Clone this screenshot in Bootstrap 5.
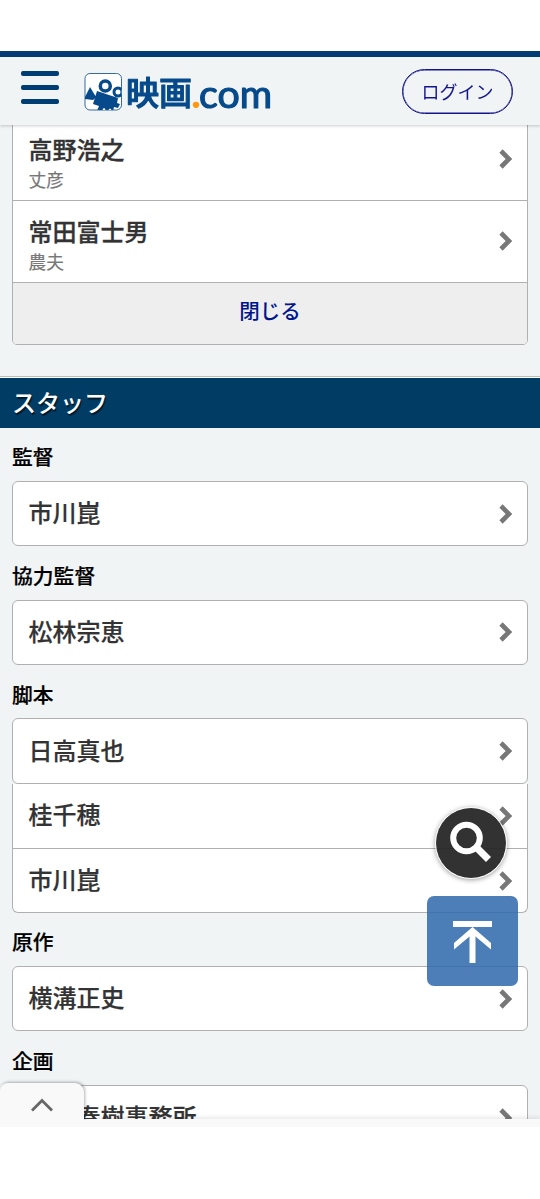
<!DOCTYPE html>
<html lang="ja">
<head>
<meta charset="utf-8">
<meta name="viewport" content="width=device-width, initial-scale=1">
<title>映画.com</title>
<link rel="stylesheet" href="https://cdn.jsdelivr.net/npm/bootstrap@5.3.0/dist/css/bootstrap.min.css">
<style>
body{font-family:"Noto Sans CJK JP",sans-serif;background:#f0f4f5;height:1199px;overflow:hidden;color:#333}
.site-head{height:125px;border-top:51px solid #fff;background:#f0f4f5;box-shadow:0 1px 3px rgba(0,0,0,.2)}
.head-line{height:6px;background:#003d73}
.menu-btn{width:38px;height:33px;margin:14px 0 0 21px}
.menu-btn i{display:block;height:5px;border-radius:2px;background:#003d73}
.logo-art{margin:0 0 0 24px}
.login-btn{width:111px;height:45px;margin:12px 27px 0 auto;border:1.5px solid #14148c;color:#14148c;font-size:18px;line-height:1;padding-bottom:2px;box-shadow:inset 0 0 0 .4px #14148c}
.page-main{padding-top:118px}
.panel-box{margin:0 12px;border:1px solid #b0b0b0;border-radius:6px;background:#fff;width:516px}
.cast-box{border-radius:0 0 5px 5px;overflow:hidden;height:227px}
.person{padding:0 14.500px 0 16px;font-size:24px;font-weight:500;line-height:30px;color:#333}
.person span{position:relative;top:-1.500px;left:-.5px;-webkit-text-stroke:.2px #333}
.cast-row{height:82px;border-bottom:1px solid #b0b0b0}
.cast-row .who{padding-top:7px;margin-left:-.5px;-webkit-text-stroke:.3px #333}
.cast-row svg{margin-bottom:1px}
.who .role{font-size:17.7px;font-weight:400;color:#777;line-height:26px;margin-top:2px;-webkit-text-stroke:.2px #777}
.close-row{height:62px;background:#eee;color:#00148c;font-size:20.5px;font-weight:500;padding-bottom:8px}
.staff-title{margin-top:30.5px;height:52px;border-top:1px solid #bbb;background:#003c64;box-shadow:inset 0 1px #fff;color:#fff;font-size:24px;font-weight:500;padding-left:12px;text-shadow:1px 2px 1px rgba(0,0,0,.6)}
.job{height:53.4px;padding:13.500px 0 0 12px;font-size:20.8px;font-weight:500;color:#000;-webkit-text-stroke:.2px #000}
.one{height:65.4px}
.upper{height:65.4px}
.lower{height:128.8px;border-top:0;border-radius:0 0 6px 6px}
.lower .person{height:64.4px}
.lower .person+.person{border-top:1px solid #b0b0b0}
.lower .person span{top:-2px}
.search-fab{left:435px;top:807px;width:72px;height:72px;background:rgba(34,34,34,.93);border:1.5px solid #fff;box-shadow:0 1px 5px rgba(0,0,0,.4)}
.top-fab{left:427px;top:896px;width:91px;height:90px;border-radius:7px;background:rgba(48,105,171,.86)}
.foot{height:80px;background:#fff;border-top:8px solid #f9f9f9;box-shadow:0 -1px 5px rgba(0,0,0,.12)}
.foot-tab{left:0;top:-44px;width:84px;height:38px;padding-top:6px;background:#f9f9f9;border-radius:8px 9px 0 0;box-shadow:1px -1px 3px rgba(0,0,0,.3);clip-path:inset(-5px -5px 1px 0)}
</style>
<script src="https://cdn.jsdelivr.net/npm/bootstrap@5.3.0/dist/js/bootstrap.bundle.min.js"></script>
</head>
<body>
<svg class="d-none"><symbol id="chev" viewBox="0 0 14 20"><path d="M2 2 10 10 2 18" fill="none" stroke="#777" stroke-width="4.6"/></symbol></svg>
<header class="site-head fixed-top">
  <div class="head-line"></div>
  <div class="d-flex align-items-start">
    <div class="menu-btn d-flex flex-column justify-content-between"><i></i><i></i><i></i></div>
    <svg class="logo-art overflow-visible" width="197" height="67" viewBox="83 57 197 67">
      <defs><clipPath id="lc"><rect x="85" y="74" width="36.500" height="36" rx="5"/></clipPath></defs>
      <rect x="85" y="73.500" width="36.500" height="36.500" rx="5" fill="#fff" stroke="#376aa4"/>
      <g clip-path="url(#lc)" fill="#064a8b">
        <path d="M84 99 90 87 96 97 93 100ZM97 91 118 98 117 103 120 104 118 108 114 107 113 111 97 111 99 106 93 104Z"/>
        <circle cx="105.300" cy="86" r="5" fill="#fff" stroke="#064a8b" stroke-width="3.500"/>
        <circle cx="118" cy="92" r="4" fill="#fff" stroke="#064a8b" stroke-width="3"/>
        <circle cx="104" cy="109.500" r="1.300" fill="#fff"/><circle cx="110" cy="110" r="1.300" fill="#fff"/>
      </g>
      <g fill="#064a8b" stroke="#064a8b" stroke-linejoin="round">
        <text x="126" y="105" font-family="Noto Sans CJK JP, sans-serif" font-size="33" font-weight="500" stroke-width="1.100" textLength="66">映画</text>
        <text x="199" y="107.500" font-family="Lato, sans-serif" font-size="39" font-weight="400" stroke-width="1.200" textLength="73" lengthAdjust="spacingAndGlyphs">com</text>
      </g>
      <text x="191" y="108" font-family="Lato, sans-serif" font-size="42" font-weight="700" fill="#ff9710">.</text>
    </svg>
    <div class="login-btn rounded-pill d-flex align-items-center justify-content-center">ログイン</div>
  </div>
</header>
<main class="page-main">
  <section class="panel-box cast-box">
    <div class="person cast-row d-flex align-items-center justify-content-between"><div class="who"><div>高野浩之</div><div class="role">丈彦</div></div><svg width="14" height="20"><use href="#chev"/></svg></div>
    <div class="person cast-row d-flex align-items-center justify-content-between"><div class="who"><div>常田富士男</div><div class="role">農夫</div></div><svg width="14" height="20"><use href="#chev"/></svg></div>
    <div class="close-row d-flex align-items-center justify-content-center">閉じる</div>
  </section>
  <h2 class="staff-title d-flex align-items-center mb-0">スタッフ</h2>
  <div class="job">監督</div>
  <div class="panel-box one person d-flex align-items-center justify-content-between"><span>市川崑</span><svg width="14" height="20"><use href="#chev"/></svg></div>
  <div class="job">協力監督</div>
  <div class="panel-box one person d-flex align-items-center justify-content-between"><span>松林宗恵</span><svg width="14" height="20"><use href="#chev"/></svg></div>
  <div class="job">脚本</div>
  <div class="panel-box upper person d-flex align-items-center justify-content-between"><span>日高真也</span><svg width="14" height="20"><use href="#chev"/></svg></div>
  <div class="panel-box lower">
    <div class="person d-flex align-items-center justify-content-between"><span>桂千穂</span><svg width="14" height="20"><use href="#chev"/></svg></div>
    <div class="person d-flex align-items-center justify-content-between"><span>市川崑</span><svg width="14" height="20"><use href="#chev"/></svg></div>
  </div>
  <div class="job">原作</div>
  <div class="panel-box one person d-flex align-items-center justify-content-between"><span>横溝正史</span><svg width="14" height="20"><use href="#chev"/></svg></div>
  <div class="job">企画</div>
  <div class="panel-box one person d-flex align-items-center justify-content-between"><span>角川春樹事務所</span><svg width="14" height="20"><use href="#chev"/></svg></div>
</main>
<div class="search-fab position-fixed rounded-circle">
  <svg class="d-block" width="69" height="69" viewBox="436.500 808.500 69 69"><circle cx="467" cy="838.500" r="13.300" fill="none" stroke="#fff" stroke-width="6"/><path d="M477 848 489 860" stroke="#fff" stroke-width="7"/></svg>
</div>
<div class="top-fab position-fixed">
  <svg class="d-block" width="91" height="90" viewBox="427 896 91 90"><g fill="#fff"><path d="M453 921H492V927H453ZM469.500 930H475.500V963H469.500Z"/><path d="M472.500 927 491 943V949.500L472.500 934 454 949.500V943Z"/></g></svg>
</div>
<footer class="foot fixed-bottom">
  <div class="foot-tab position-absolute d-flex justify-content-center align-items-center">
    <svg width="24" height="16" viewBox="0 0 24 16"><path d="M2 13.500 12 3.500 22 13.500" fill="none" stroke="#666" stroke-width="2.800"/></svg>
  </div>
</footer>
</body>
</html>
